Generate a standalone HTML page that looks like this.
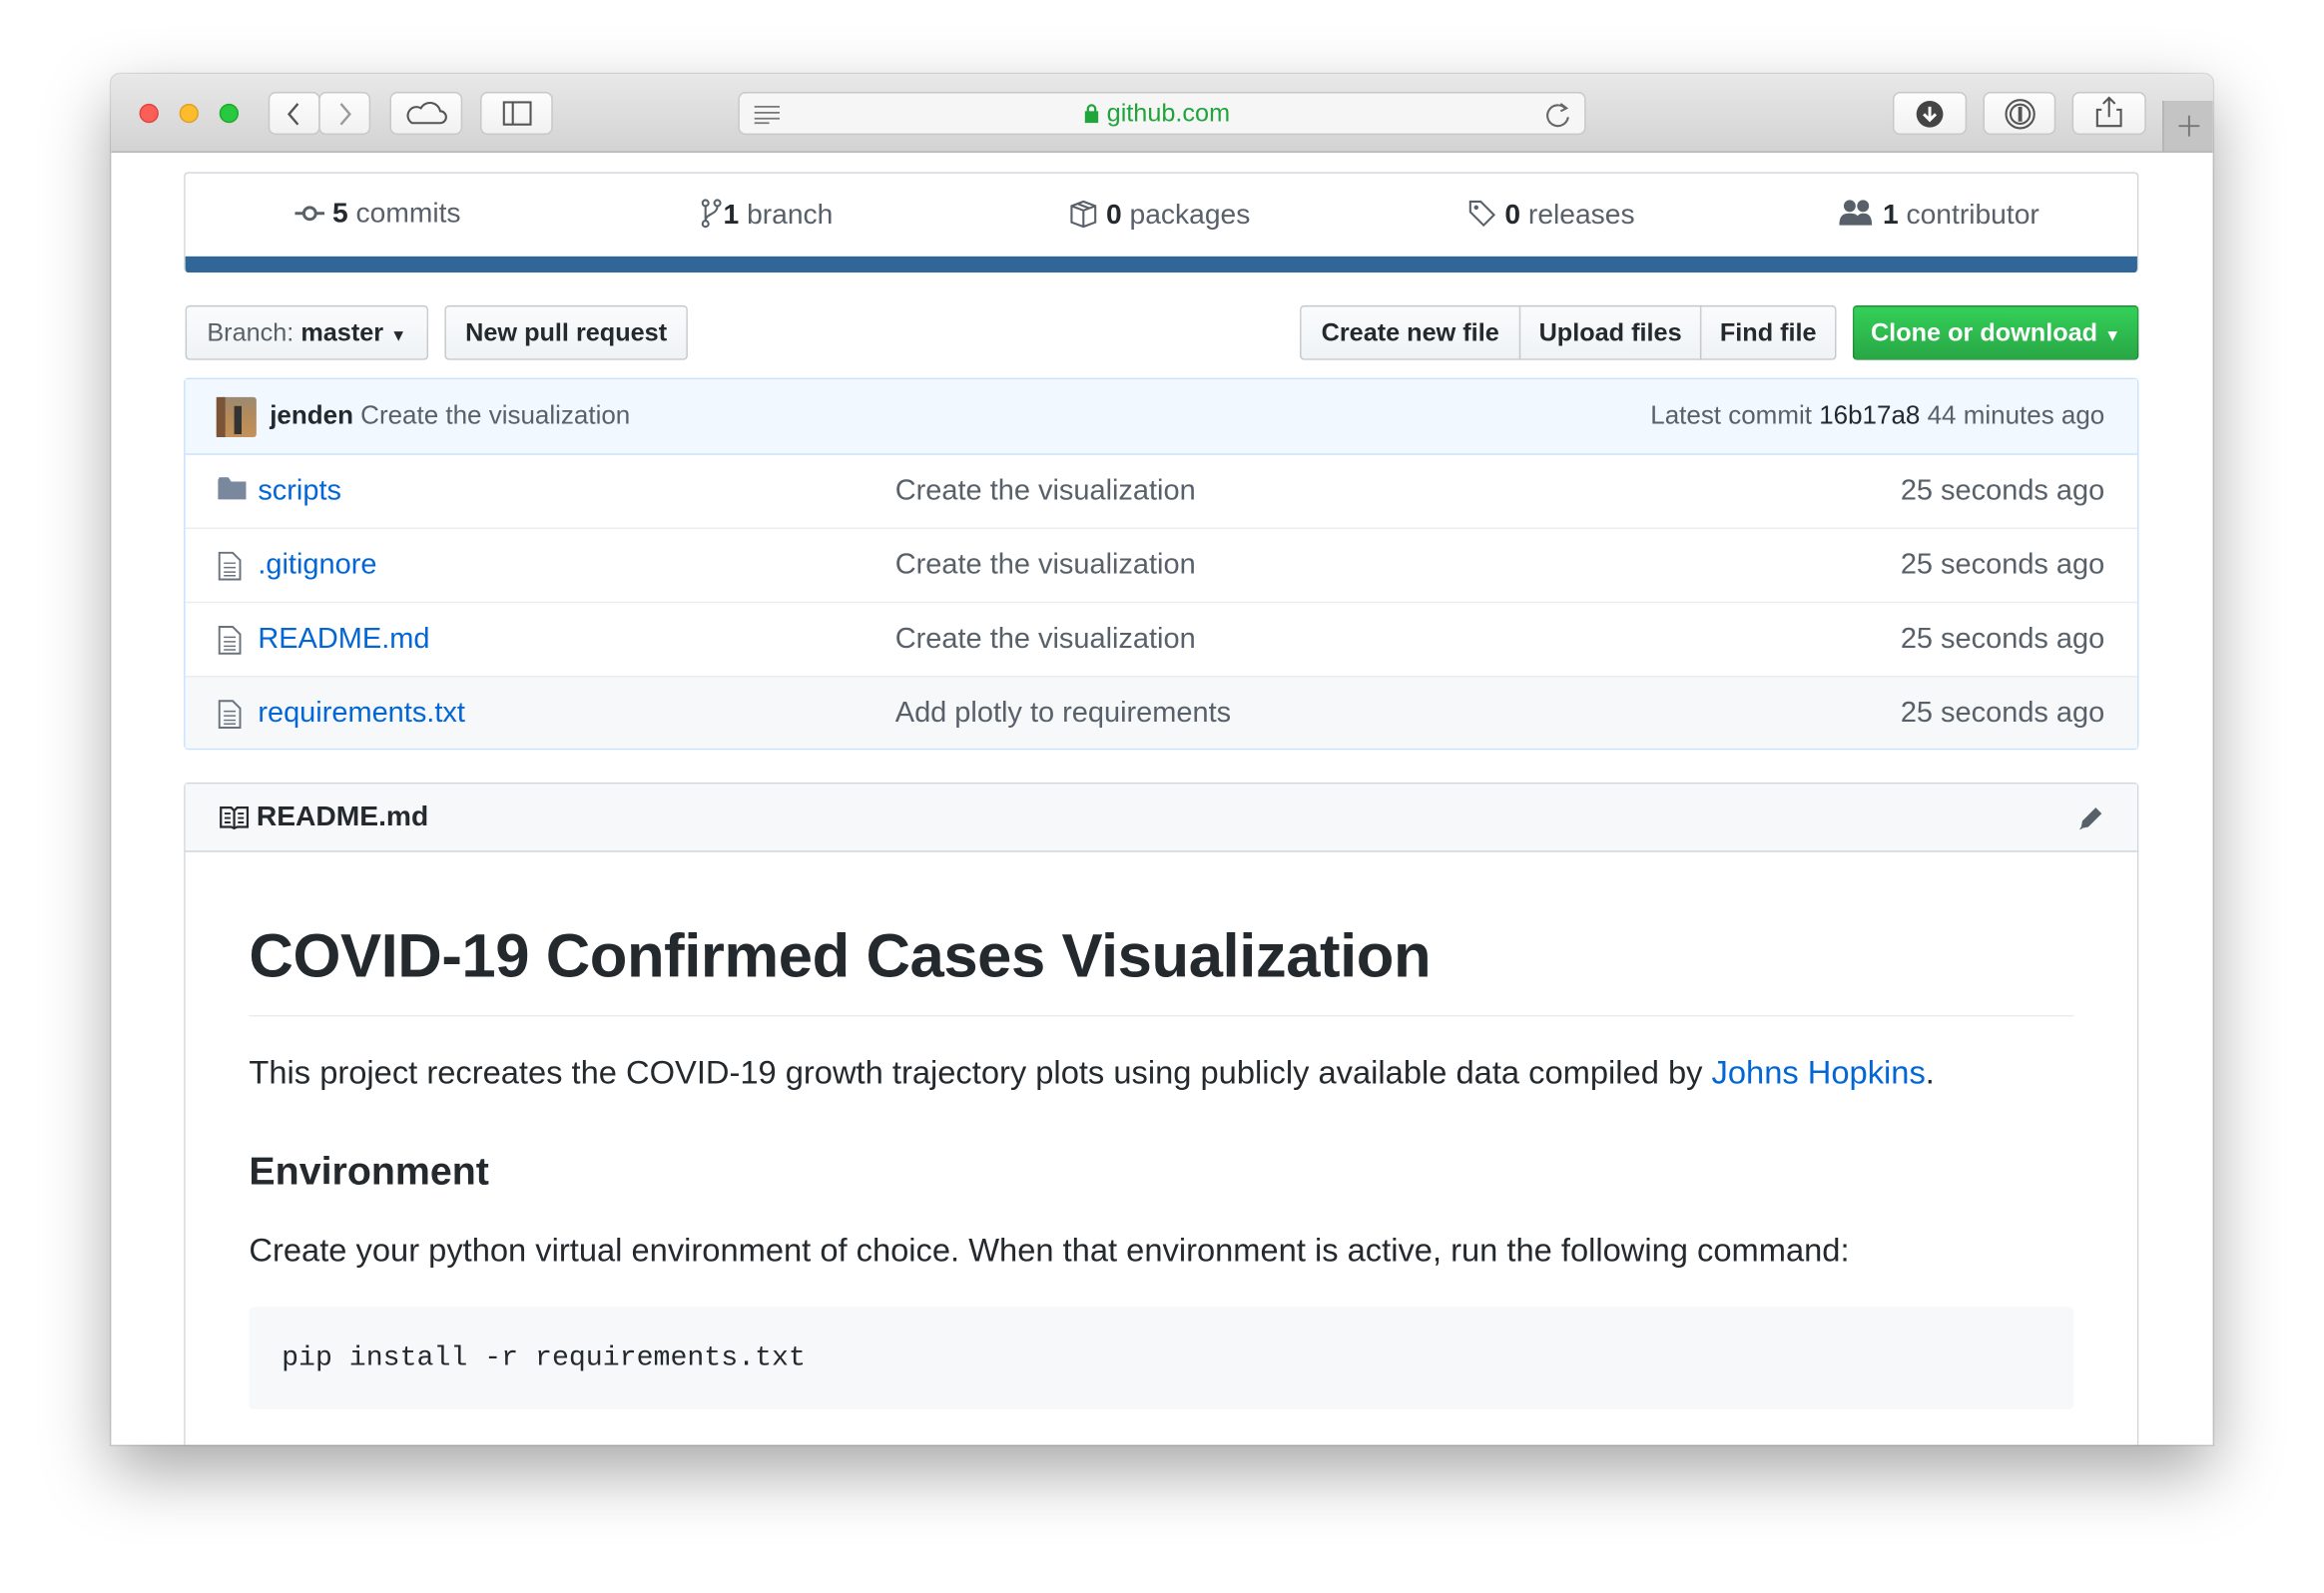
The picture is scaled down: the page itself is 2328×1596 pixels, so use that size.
<!DOCTYPE html>
<html><head><meta charset="utf-8"><style>
html,body{margin:0;padding:0;background:#fff;width:2328px;height:1596px;overflow:hidden}
#s{position:absolute;left:0;top:0;width:1568px;height:1075px;transform:scale(1.48469);transform-origin:0 0;font-family:"Liberation Sans",sans-serif;color:#24292e}
.a{position:absolute}
.win{left:75px;top:50px;width:1418px;height:925px;background:#fff;border-radius:6px 6px 0 0;box-shadow:0 18px 45px rgba(0,0,0,.35),0 0 0 1px rgba(0,0,0,.12);overflow:hidden}
.tb{left:0;top:0;width:1418px;height:52px;background:linear-gradient(#e8e8e8,#d3d3d3);border-bottom:1px solid #b2b2b2}
.dot{width:13px;height:13px;border-radius:50%;top:20px}
.btn{top:12px;height:29px;background:linear-gradient(#fdfdfd,#f1f1f1);border:1px solid #c8c8c8;border-radius:5px;box-sizing:border-box}
.box{border:1px solid #d1d5da;border-radius:3px;box-sizing:border-box}
.stat{top:134px;font-size:19px;color:#586069;white-space:nowrap}
.stat b{color:#24292e}
.gb{top:206px;height:37px;background:linear-gradient(#fafbfc,#eff3f6);border:1px solid rgba(27,31,35,.2);box-sizing:border-box;font-size:17px;font-weight:bold;line-height:35px;text-align:center;border-radius:3px}
.row{left:125px;width:1317px;height:50px;border-top:1px solid #eaecef;box-sizing:border-box;font-size:19.5px}
.row .n{position:absolute;left:49px;top:13px;color:#0366d6}
.row .m{position:absolute;left:479px;top:13px;color:#586069}
.row .t{position:absolute;right:22px;top:13px;color:#586069}
.fi{position:absolute;left:22px;top:15px}
</style></head><body><div id="s">
<div class="a win">
 <div class="a tb">
  <div class="a dot" style="left:19px;background:#fc5f57;border:1px solid #e0443e;box-sizing:border-box"></div>
  <div class="a dot" style="left:46px;background:#fdbc2e;border:1px solid #dea123;box-sizing:border-box"></div>
  <div class="a dot" style="left:73px;background:#28c840;border:1px solid #1aab29;box-sizing:border-box"></div>
  <div class="a btn" style="left:106px;width:35px"><svg width="33" height="27"><path d="M19 7l-6 7 6 7" fill="none" stroke="#555" stroke-width="1.6"/></svg></div>
  <div class="a btn" style="left:140px;width:35px"><svg width="33" height="27"><path d="M14 7l6 7-6 7" fill="none" stroke="#999" stroke-width="1.6"/></svg></div>
  <div class="a btn" style="left:188px;width:49px"><svg width="47" height="27"><path d="M14 20h19a4 4 0 0 0 0-8 7 7 0 0 0-13-2 5 5 0 0 0-6 10z" fill="none" stroke="#555" stroke-width="1.4"/></svg></div>
  <div class="a btn" style="left:249px;width:49px"><svg width="47" height="27"><rect x="15" y="6" width="18" height="15" fill="none" stroke="#555" stroke-width="1.4"/><line x1="21" y1="6" x2="21" y2="21" stroke="#555" stroke-width="1.4"/></svg></div>
  <div class="a btn" style="left:423px;width:572px;background:#f6f6f6">
   <svg class="a" style="left:8px;top:7px" width="22" height="14"><path d="M2 2h17M2 6h17M2 10h17M2 13h10" stroke="#777" stroke-width="1.2"/></svg>
   <div class="a" style="left:232px;top:4px;font-size:17px;color:#1fa53a"><svg width="11" height="13" style="vertical-align:-1px"><rect x="1" y="5" width="9" height="8" fill="#1fa53a"/><path d="M3 6V3.5a2.5 2.5 0 0 1 5 0V6" fill="none" stroke="#1fa53a" stroke-width="1.5"/></svg> github.com</div>
   <svg class="a" style="left:544px;top:6px" width="18" height="18"><path d="M13 4a7 7 0 1 0 2 6" fill="none" stroke="#666" stroke-width="1.4"/><path d="M10 1l4 3-4 2" fill="none" stroke="#666" stroke-width="1.3"/></svg>
  </div>
  <div class="a btn" style="left:1202px;width:50px"><svg width="48" height="27"><circle cx="24" cy="14" r="9" fill="#444"/><path d="M24 9v8M20 14l4 4 4-4" stroke="#fff" stroke-width="2" fill="none"/></svg></div>
  <div class="a btn" style="left:1263px;width:49px"><svg width="47" height="27"><circle cx="24" cy="14" r="9.5" fill="none" stroke="#555" stroke-width="1.4"/><circle cx="24" cy="14" r="6.5" fill="none" stroke="#555" stroke-width="1.4"/><rect x="22.7" y="9" width="2.6" height="10" fill="#555"/></svg></div>
  <div class="a btn" style="left:1323px;width:50px"><svg width="48" height="27"><path d="M24 3v13M20 7l4-4 4 4M19 11h-3v11h16V11h-3" fill="none" stroke="#555" stroke-width="1.4"/></svg></div>
  <div class="a" style="left:1384px;top:18px;width:34px;height:34px;background:#c4c4c4;border-left:1px solid #b0b0b0"><svg width="34" height="34"><path d="M17 10v14M10 17h14" stroke="#777" stroke-width="1.3"/></svg></div>
 </div>
</div>

<div class="a box" style="left:124px;top:116px;width:1319px;height:68px;border-bottom:none;overflow:hidden">
 <div class="a" style="left:0;bottom:0;width:1319px;height:11px;background:#316698"></div>
</div>
<div class="a stat" style="left:199px"><svg width="20" height="14" style="vertical-align:-1px"><circle cx="10" cy="7" r="4" fill="none" stroke="#586069" stroke-width="2"/><path d="M0 7h6M14 7h6" stroke="#586069" stroke-width="2"/></svg> <b>5</b> commits</div>
<div class="a stat" style="left:472px"><svg width="16" height="20" style="vertical-align:-3px"><circle cx="4" cy="3" r="2" fill="none" stroke="#586069" stroke-width="1.4"/><circle cx="4" cy="17" r="2" fill="none" stroke="#586069" stroke-width="1.4"/><circle cx="12" cy="3" r="2" fill="none" stroke="#586069" stroke-width="1.4"/><path d="M4 5v10M12 5c0 6-8 5-8 10" fill="none" stroke="#586069" stroke-width="1.4"/></svg><b>1</b> branch</div>
<div class="a stat" style="left:721px"><svg width="20" height="20" style="vertical-align:-3px"><path d="M2 5l8-3 8 3v11l-8 3-8-3z M2 5l8 3 8-3M10 8v11M6 3.5l8 3" fill="none" stroke="#586069" stroke-width="1.4"/></svg> <b>0</b> packages</div>
<div class="a stat" style="left:990px"><svg width="20" height="20" style="vertical-align:-3px"><path d="M2 2h7l9 9-7 7-9-9z" fill="none" stroke="#586069" stroke-width="1.4"/><circle cx="6" cy="6" r="1.5" fill="#586069"/></svg> <b>0</b> releases</div>
<div class="a stat" style="left:1241px"><svg width="24" height="20" style="vertical-align:-3px"><circle cx="7" cy="5" r="4" fill="#586069"/><circle cx="16" cy="5" r="4" fill="#586069"/><path d="M0 18c0-7 3-8 7-8s7 1 7 8zM11 18c0-6 2-8 5-8s6 1 6 8z" fill="#586069"/></svg> <b>1</b> contributor</div>

<div class="a gb" style="left:125px;width:164px;font-weight:normal;color:#586069">Branch: <b style="color:#24292e">master</b> <span style="font-size:11px;color:#24292e">▼</span></div>
<div class="a gb" style="left:300px;width:164px">New pull request</div>
<div class="a gb" style="left:877px;width:149px;border-radius:3px 0 0 3px">Create new file</div>
<div class="a gb" style="left:1025px;width:123px;border-radius:0">Upload files</div>
<div class="a gb" style="left:1147px;width:92px;border-radius:0 3px 3px 0">Find file</div>
<div class="a gb" style="left:1250px;width:193px;background:linear-gradient(#34d058,#28a745);color:#fff;border-color:rgba(27,31,35,.25)">Clone or download <span style="font-size:11px">▼</span></div>

<div class="a" style="left:124px;top:255px;width:1319px;height:251px;border:1px solid #c8e1ff;border-radius:3px;box-sizing:border-box"></div>
<div class="a" style="left:125px;top:256px;width:1317px;height:50px;background:#f1f8ff;font-size:17.5px;color:#586069">
 <div class="a" style="left:21px;top:12px;width:27px;height:27px;background:linear-gradient(#9c8a74 0,#b08a5c 40%,#c4915a 100%);border-radius:2px"><div class="a" style="left:12px;top:6px;width:5px;height:19px;background:#333"></div><div class="a" style="left:0;top:0;width:6px;height:27px;background:#7b5438"></div></div>
 <div class="a" style="left:57px;top:14px"><b style="color:#24292e">jenden</b> Create the visualization</div>
 <div class="a" style="right:22px;top:14px">Latest commit <span style="color:#24292e">16b17a8</span> 44 minutes ago</div>
</div>
<div class="a row" style="top:306px;border-top-color:#c8e1ff"><svg class="fi" width="20" height="16"><path d="M0 2v13h19V3H9L7 0H1z" fill="#79889c"/></svg><span class="n">scripts</span><span class="m">Create the visualization</span><span class="t">25 seconds ago</span></div>
<div class="a row" style="top:356px"><svg class="fi" width="16" height="20"><path d="M1 1h9l5 5v13H1z" fill="none" stroke="#6a737d" stroke-width="1.3"/><path d="M4 8h8M4 11h8M4 14h8M4 16.5h8" stroke="#6a737d"/></svg><span class="n">.gitignore</span><span class="m">Create the visualization</span><span class="t">25 seconds ago</span></div>
<div class="a row" style="top:406px"><svg class="fi" width="16" height="20"><path d="M1 1h9l5 5v13H1z" fill="none" stroke="#6a737d" stroke-width="1.3"/><path d="M4 8h8M4 11h8M4 14h8M4 16.5h8" stroke="#6a737d"/></svg><span class="n">README.md</span><span class="m">Create the visualization</span><span class="t">25 seconds ago</span></div>
<div class="a row" style="top:456px;height:49px;background:#f6f8fa"><svg class="fi" width="16" height="20"><path d="M1 1h9l5 5v13H1z" fill="none" stroke="#6a737d" stroke-width="1.3"/><path d="M4 8h8M4 11h8M4 14h8M4 16.5h8" stroke="#6a737d"/></svg><span class="n">requirements.txt</span><span class="m">Add plotly to requirements</span><span class="t">25 seconds ago</span></div>

<div class="a" style="left:124px;top:528px;width:1319px;height:447px;border:1px solid #d1d5da;border-bottom:none;border-radius:3px 3px 0 0;box-sizing:border-box"></div>
<div class="a" style="left:125px;top:529px;width:1317px;height:45px;background:#f6f8fa;border-bottom:1px solid #d1d5da;font-size:19px;font-weight:bold">
 <svg class="a" style="left:23px;top:15px" width="20" height="16"><path d="M1 1h7l2 2 2-2h7v13h-7l-2 1-2-1H1z M10 3v12" fill="none" stroke="#24292e" stroke-width="1.5"/><path d="M3.5 5h4M3.5 8h4M3.5 11h4M12.5 5h4M12.5 8h4M12.5 11h4" stroke="#24292e" stroke-width="1.3"/></svg>
 <div class="a" style="left:48px;top:12px">README.md</div>
 <svg class="a" style="left:1276px;top:13px" width="20" height="20"><path d="M3 17l1-5L13 3l4 4-9 9z" fill="#586069"/><path d="M2 18l2-1-1-1z" fill="#586069"/></svg>
</div>
<div class="a" style="left:168px;top:621px;font-size:41.5px;font-weight:bold;white-space:nowrap;letter-spacing:-.3px">COVID-19 Confirmed Cases Visualization</div>
<div class="a" style="left:168px;top:685px;width:1231px;height:1px;background:#eaecef"></div>
<div class="a" style="left:168px;top:711px;font-size:22px;white-space:nowrap">This project recreates the COVID-19 growth trajectory plots using publicly available data compiled by <span style="color:#0366d6">Johns Hopkins</span>.</div>
<div class="a" style="left:168px;top:775px;font-size:26.5px;font-weight:bold">Environment</div>
<div class="a" style="left:168px;top:831px;font-size:22px;white-space:nowrap">Create your python virtual environment of choice. When that environment is active, run the following command:</div>
<div class="a" style="left:168px;top:882px;width:1231px;height:69px;background:#f6f8fa;border-radius:3px"><div class="a" style="left:22px;top:23px;font-family:'Liberation Mono',monospace;font-size:19px">pip install -r requirements.txt</div></div>
</div></body></html>
